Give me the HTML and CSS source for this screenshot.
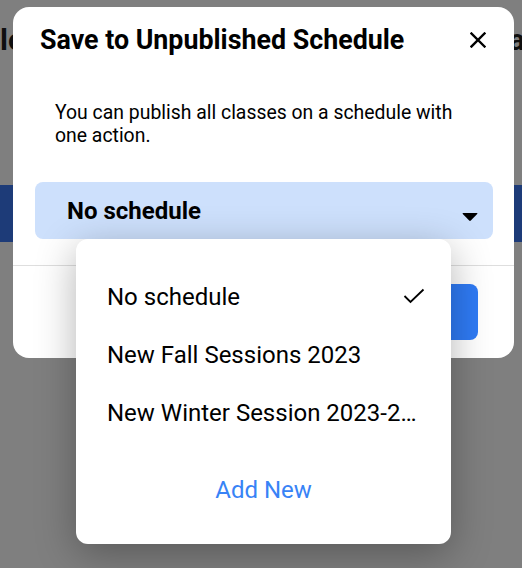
FILE: index.html
```html
<!DOCTYPE html>
<html lang="en">
<head>
  <meta charset="UTF-8">
  <title>Save to Unpublished Schedule</title>
  <link rel="stylesheet" href="styles.css">
</head>
<body>
  <div class="page">
    <div class="page-head">
      <span>lo</span>
      <span>a</span>
    </div>
    <div class="page-band"></div>
  </div>

  <div class="modal">
    <div class="modal-header">
      <h2 class="modal-title">Save to Unpublished Schedule</h2>
      <button class="close-btn" aria-label="Close">
        <svg width="16" height="16" viewBox="0 0 16 16">
          <path d="M1.5 1.5 L14.5 14.5 M14.5 1.5 L1.5 14.5" stroke="#000" stroke-width="2.4" stroke-linecap="square" fill="none"/>
        </svg>
      </button>
    </div>
    <p class="modal-text">You can publish all classes on a schedule with one action.</p>

    <div class="select-wrap">
      <div class="select">
        <span>No schedule</span>
        <svg class="caret" width="16" height="10" viewBox="0 0 16 10">
          <path d="M1.2 1 H14.8 Q16 1 15.2 2 L8.8 8.6 Q8 9.4 7.2 8.6 L0.8 2 Q0 1 1.2 1 Z" fill="#000"/>
        </svg>
      </div>

      <div class="dropdown">
        <div class="option">
          <span class="option-label">No schedule</span>
          <svg class="check" width="22" height="16" viewBox="0 0 22 16">
            <polyline points="1.5,8 7.5,14 20.5,1.5" fill="none" stroke="#000" stroke-width="1.8"/>
          </svg>
        </div>
        <div class="option">
          <span class="option-label">New Fall Sessions 2023</span>
        </div>
        <div class="option">
          <span class="option-label">New Winter Session 2023-2024</span>
        </div>
        <div class="add-new">Add New</div>
      </div>
    </div>

    <div class="modal-footer">
      <button class="primary-btn">Save</button>
    </div>
  </div>
</body>
</html>
```

FILE: styles.css
```css
body {
  margin: 0;
  background-color: #7f7f7f;
  font-family: Roboto, "Liberation Sans", Arial, sans-serif;
  width: 522px;
  height: 568px;
  overflow: hidden;
  position: relative;
}
.page-head {
  display: flex;
  justify-content: space-between;
  padding-top: 22px;
  height: 163px;
  font-size: 30px;
  font-weight: bold;
  color: #0f0f0f;
  line-height: 36px;
}
.page-head span:last-child {
  margin-right: -3px;
}
.page-band {
  height: 57px;
  background-color: #1d3b78;
}
.modal {
  position: absolute;
  left: 13px;
  top: 7px;
  width: 501px;
  height: 351px;
  background-color: white;
  border-radius: 16px;
  box-sizing: border-box;
}
.modal-header {
  display: flex;
  align-items: center;
  justify-content: space-between;
  padding: 18px 28px 0 27px;
  height: 30px;
}
.modal-title {
  margin: 0;
  font-size: 26.8px;
  line-height: 30px;
  font-weight: bold;
  color: #000;
}
.close-btn {
  border: none;
  background: none;
  padding: 0;
  width: 16px;
  height: 16px;
  display: flex;
  cursor: pointer;
}
.modal-text {
  margin: 46px 0 0 42px;
  width: 420px;
  font-size: 19.4px;
  line-height: 23px;
  color: #000;
}
.select-wrap {
  position: relative;
  margin: 35px 21px 0 22px;
}
.select {
  display: flex;
  align-items: center;
  justify-content: space-between;
  height: 57px;
  padding: 0 15px 0 32px;
  background-color: #cde0fc;
  border-radius: 8px;
  font-size: 24px;
  font-weight: bold;
  color: #000;
}
.caret {
  margin-top: 12px;
}
.dropdown {
  position: absolute;
  left: 41px;
  top: 57px;
  width: 375px;
  height: 305px;
  box-sizing: border-box;
  padding-top: 29px;
  background-color: white;
  border-radius: 12px;
  box-shadow: 0 10px 40px rgba(0, 0, 0, 0.3);
  z-index: 2;
}
.option {
  display: flex;
  align-items: center;
  height: 58px;
  padding: 0 26px 0 31px;
  font-size: 24px;
  color: #000;
}
.option-label {
  max-width: 310px;
  white-space: nowrap;
  overflow: hidden;
  text-overflow: ellipsis;
}
.check {
  margin-left: auto;
  margin-top: -2px;
}
.add-new {
  margin-top: 19px;
  height: 58px;
  line-height: 58px;
  text-align: center;
  font-size: 24px;
  color: #3883f6;
}
.modal-footer {
  margin-top: 26px;
  border-top: 1px solid #dedede;
  display: flex;
  justify-content: flex-end;
  padding: 18px 36px 0 0;
}
.primary-btn {
  width: 110px;
  height: 56px;
  border: none;
  border-radius: 8px;
  background-color: #2f7bf5;
  color: white;
  font-size: 18px;
  font-family: inherit;
}
```
